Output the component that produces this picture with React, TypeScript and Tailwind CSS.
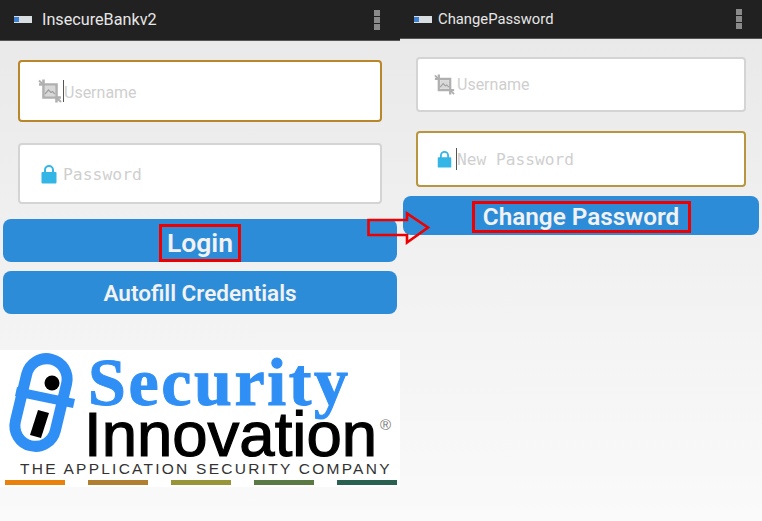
const CropIcon = ({ className }: { className: string }) => (
  <svg viewBox="0 0 24 24" className={className} fill="none" stroke="#b0b0b0">
    <path d="M5.5 0.5 L5.5 18.5 L23 18.5" strokeWidth="2.6" />
    <path d="M1 5.5 L18.5 5.5 L18.5 23.5" strokeWidth="2.6" />
    <path d="M1 1.5 L5 5.5 M18.5 18.5 L23 23" strokeWidth="2" />
    <rect x="7" y="7" width="10" height="10" fill="#d8d8d8" stroke="none" />
    <path d="M7 15 L10.5 11 L13 13.5 L14.5 12.5 L17 15" strokeWidth="1.2" stroke="#a0a0a0" />
  </svg>
);

const LockIcon = ({ className }: { className: string }) => (
  <svg viewBox="0 0 16 20" className={className}>
    <path d="M4 9 V6 a4 4 0 0 1 8 0 V9" fill="none" stroke="#33b5e5" strokeWidth="2" />
    <rect x="0.5" y="8" width="15" height="11.5" rx="1" fill="#33b5e5" />
  </svg>
);

const AppBar = ({ title, height, titleClass }: { title: string; height: string; titleClass: string }) => (
  <div className={`flex items-center justify-between bg-[#212121] border-b border-[#555] ${height}`}>
    <div className="flex items-center">
      <div className="flex h-[7px] w-[18px] items-center bg-[#d8dde2] ml-[14px]">
        <div className="h-[5px] w-[5px] bg-[#3d7fd0]" />
      </div>
      <span className={`text-[#e6e6e6] ${titleClass}`}>{title}</span>
    </div>
    <div className="flex flex-col gap-[1px] mr-[20px]">
      <div className="h-[6px] w-[6px] bg-[#8a8a8a]" />
      <div className="h-[6px] w-[6px] bg-[#8a8a8a]" />
      <div className="h-[6px] w-[6px] bg-[#8a8a8a]" />
    </div>
  </div>
);

const SecurityLogo = () => (
  <div className="flex h-[137px] flex-col bg-white">
    <div className="flex h-[110px]">
      <svg viewBox="0 0 88 110" className="h-[110px] w-[88px] shrink-0">
        <rect x="20.5" y="8" width="41" height="89" rx="20.5" fill="none" stroke="#2f8ff5" strokeWidth="11" transform="rotate(13.5 41 52.5)" />
        <path d="M17 37 L75 49 L73 58 L15 46 Z" fill="#2f8ff5" />
        <circle cx="52" cy="33" r="7.5" fill="#000" />
        <path d="M38 60 L49 63 L41 88 L30 85 Z" fill="#000" />
      </svg>
      <div className="flex flex-col">
        <span className="mt-[3px] h-[58px] font-['Liberation_Serif'] text-[68px] font-bold leading-[58px] tracking-[2.6px] whitespace-nowrap text-[#2f8ff5] [-webkit-text-stroke:1px_#2f8ff5]">Security</span>
        <div className="-ml-[4px] -mt-[2px] flex items-start">
          <span className="font-['Liberation_Sans'] text-[63.5px] leading-[50px] text-black [-webkit-text-stroke:1.2px_black]">Innovation</span>
          <span className="ml-[3px] mt-[8px] font-['Liberation_Sans'] text-[15px] leading-[15px] text-[#777]">®</span>
        </div>
      </div>
    </div>
    <div className="mt-[1px] pl-[20px] font-['Liberation_Sans'] text-[15.5px] leading-[16px] tracking-[2.25px] whitespace-nowrap text-[#333]">
      THE APPLICATION SECURITY COMPANY
    </div>
    <div className="mt-[3px] flex justify-between px-[5px] pr-[3px]">
      <div className="h-[5px] w-[60px] bg-[#e8820c]" />
      <div className="h-[5px] w-[60px] bg-[#b08030]" />
      <div className="h-[5px] w-[60px] bg-[#989438]" />
      <div className="h-[5px] w-[60px] bg-[#5a7a44]" />
      <div className="h-[5px] w-[60px] bg-[#2a6050]" />
    </div>
  </div>
);

export default function App() {
  return (
    <div className="relative flex h-[521px] w-[762px] overflow-hidden bg-gradient-to-b from-[#e8e8e8] to-[#fafafa] font-['Roboto',sans-serif]">
      <div className="flex w-[400px] flex-col">
        <AppBar title="InsecureBankv2" height="h-[41px]" titleClass="ml-[10px] text-[16.2px]" />
        <div className="mx-[18px] mt-[19px] flex h-[62px] items-center rounded-[4px] border-2 border-[#b8862b] bg-white pl-[18px]">
          <CropIcon className="h-[24px] w-[24px]" />
          <div className="ml-[1px] h-[22px] w-[1px] bg-[#555]" />
          <span className="pt-[3px] text-[16px] text-[#cfcfcf]">Username</span>
        </div>
        <div className="mx-[18px] mt-[21px] flex h-[61px] items-center rounded-[4px] border-2 border-[#d4d4d4] bg-white pl-[21px]">
          <LockIcon className="h-[20px] w-[16px]" />
          <span className="ml-[6px] pt-[3px] font-['DejaVu_Sans_Mono',monospace] text-[16.4px] text-[#cfcfcf]">Password</span>
        </div>
        <div className="mx-[3px] mt-[15px] flex h-[43px] items-start justify-center rounded-[8px] bg-[#2d8cd8]">
          <span className="mt-[5px] flex h-[38px] w-[82px] items-center justify-center border-[3px] border-[#ee0000] text-[26.5px] font-semibold text-[#f2f2f2]">Login</span>
        </div>
        <div className="mx-[3px] mt-[9px] flex h-[43px] items-center justify-center rounded-[8px] bg-[#2d8cd8] pt-[3px] text-[22.5px] font-semibold text-[#f2f2f2]">
          Autofill Credentials
        </div>
        <div className="mt-[36px]">
          <SecurityLogo />
        </div>
      </div>
      <div className="flex flex-1 flex-col">
        <AppBar title="ChangePassword" height="h-[39px]" titleClass="ml-[6px] text-[14.8px]" />
        <div className="ml-[16px] mr-[16px] mt-[18px] flex h-[55px] items-center rounded-[4px] border-2 border-[#d4d4d4] bg-white pl-[16px]">
          <CropIcon className="h-[21px] w-[21px]" />
          <span className="ml-[2px] text-[16px] text-[#cfcfcf]">Username</span>
        </div>
        <div className="ml-[16px] mr-[16px] mt-[19px] flex h-[56px] items-center rounded-[4px] border-2 border-[#b8963f] bg-white pl-[19px]">
          <LockIcon className="h-[18px] w-[15px]" />
          <div className="ml-[4px] h-[22px] w-[1px] bg-[#555]" />
          <span className="pt-[3px] font-['DejaVu_Sans_Mono',monospace] text-[16.2px] text-[#cfcfcf]">New Password</span>
        </div>
        <div className="ml-[3px] mr-[3px] mt-[9px] flex h-[39px] items-start justify-center rounded-[8px] bg-[#2d8cd8]">
          <span className="mt-[5px] flex h-[32px] w-[219px] items-center justify-center border-[3px] border-[#ee0000] text-[24.3px] font-semibold text-[#f2f2f2]">Change Password</span>
        </div>
      </div>
      <svg viewBox="0 0 64 34" className="absolute left-[367px] top-[211px] h-[34px] w-[64px]" fill="none">
        <path d="M1.5 9 H40 V2.5 L61 16.5 L40 31.5 V24 H1.5 Z" stroke="#ee0000" strokeWidth="2.6" />
      </svg>
    </div>
  );
}
